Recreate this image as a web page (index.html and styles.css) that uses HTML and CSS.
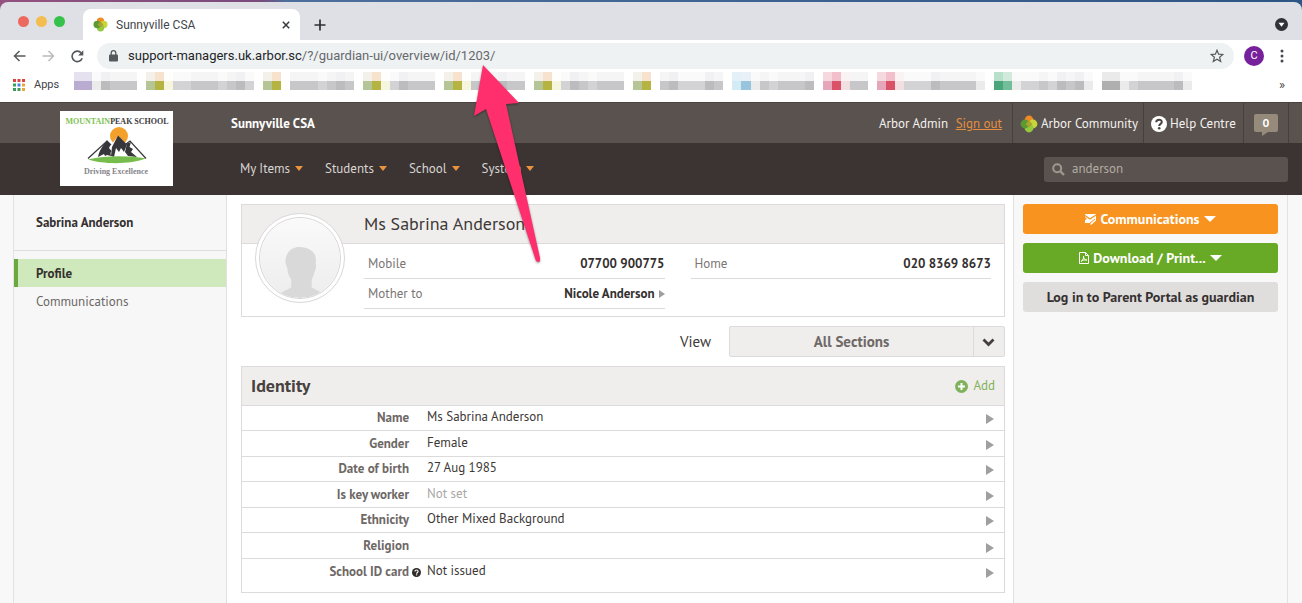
FILE: index.html
```
<!DOCTYPE html>
<html lang="en">
<head>
  <meta charset="UTF-8">
  <meta name="viewport" content="width=device-width, initial-scale=1.0">
  <title>Sunnyville CSA</title>
  <link rel="stylesheet" href="styles.css">
</head>
<body>
  <svg class="sprites" width="0" height="0" aria-hidden="true">
    <symbol id="flower" viewBox="0 0 18 18">
      <circle cx="9" cy="5" r="4.4" fill="#f08a24"/>
      <circle cx="13" cy="9" r="4.4" fill="#c9d63a"/>
      <circle cx="9" cy="13" r="4.4" fill="#93c83f"/>
      <circle cx="5" cy="9" r="4.4" fill="#5b9a33"/>
      <path d="M9 5.5 12.5 9 9 12.5 5.5 9z" fill="#a5a52f"/>
    </symbol>
  </svg>

  <!-- Browser window -->
  <div class="desktop">
    <div class="tab-strip">
      <div class="lights"><span class="red"></span><span class="amber"></span><span class="green"></span></div>
      <div class="tab">
        <svg width="15" height="15"><use href="#flower"/></svg>
        <span class="tab-title">Sunnyville CSA</span>
        <button class="chrome-btn" aria-label="Close tab">
          <svg width="8" height="8" viewBox="0 0 8 8"><path d="M.8.8 7.2 7.2M7.2.8.8 7.2" stroke="#36393d" stroke-width="1.5"/></svg>
        </button>
      </div>
      <button class="chrome-btn new-tab" aria-label="New tab">
        <svg width="12" height="12" viewBox="0 0 12 12"><path d="M6 .5v11M.5 6h11" stroke="#2d3034" stroke-width="1.7"/></svg>
      </button>
      <button class="chrome-btn tab-search" aria-label="Search tabs">
        <svg width="13" height="13" viewBox="0 0 13 13"><circle cx="6.5" cy="6.5" r="6.5" fill="#2f3337"/><path d="M3.5 4.8h6l-3 4z" fill="#fff"/></svg>
      </button>
    </div>
  </div>
  <div class="toolbar">
    <button class="chrome-btn" aria-label="Back">
      <svg width="13" height="12" viewBox="0 0 13 12"><path d="M12.5 6H1.5M6.5 1l-5 5 5 5" fill="none" stroke="#54585c" stroke-width="1.5"/></svg>
    </button>
    <button class="chrome-btn" aria-label="Forward">
      <svg width="13" height="12" viewBox="0 0 13 12"><path d="M.5 6h11M6.5 1l5 5-5 5" fill="none" stroke="#b9bbbe" stroke-width="1.5"/></svg>
    </button>
    <button class="chrome-btn" aria-label="Reload">
      <svg width="13" height="13" viewBox="0 0 13 13"><path d="M11.2 8.2A5.2 5.2 0 1 1 10.3 3" fill="none" stroke="#54585c" stroke-width="1.6"/><path d="M12.3.3v5.2H7.1z" fill="#54585c"/></svg>
    </button>
    <div class="address">
      <svg width="9" height="12" viewBox="0 0 9 12"><rect y="4.5" width="9" height="7" rx="1" fill="#55595d"/><path d="M2.2 5V3a2.3 2.3 0 0 1 4.6 0v2" fill="none" stroke="#55595d" stroke-width="1.3"/></svg>
      <span class="url"><b>support-managers.uk.arbor.sc</b>/?/guardian-ui/overview/id/1203/</span>
      <svg width="14" height="14" viewBox="0 0 14 14"><path d="m7 1.2 1.6 4 4.3.3-3.3 2.8 1.1 4.2L7 10.2l-3.7 2.3 1.1-4.2-3.3-2.8 4.3-.3z" fill="none" stroke="#55595d" stroke-width="1.2"/></svg>
    </div>
    <button class="account" aria-label="Account">C</button>
    <button class="chrome-btn" aria-label="Menu">
      <svg width="4" height="14" viewBox="0 0 4 14" fill="#45484c"><circle cx="2" cy="2" r="1.5"/><circle cx="2" cy="7" r="1.5"/><circle cx="2" cy="12" r="1.5"/></svg>
    </button>
  </div>
  <div class="bookmarks">
    <a class="apps" href="#">
      <svg width="12" height="12" viewBox="0 0 12 12">
        <path d="M0 0h3v3H0zM4.5 0h3v3h-3zM9 0h3v3H9z" fill="#d9473c"/>
        <path d="M0 4.5h3v3H0z" fill="#35a25a"/><path d="M4.5 4.5h3v3h-3z" fill="#4a84e0"/><path d="M9 4.5h3v3H9z" fill="#e8a93a"/>
        <path d="M0 9h3v3H0zM4.5 9h3v3h-3z" fill="#3b9c5a"/><path d="M9 9h3v3H9z" fill="#e8a93a"/>
      </svg>
      Apps
    </a>
    <svg class="mosaic" id="mosaic" height="21" aria-hidden="true"></svg>
    <button class="chrome-btn more" aria-label="More bookmarks">»</button>
  </div>

  <!-- Application -->
  <header class="app-header">
    <a class="school-logo" href="#" aria-label="Mountain Peak School">
      <svg width="113" height="75" viewBox="0 0 113 75">
        <text x="57" y="13" text-anchor="middle" class="logo-name"><tspan fill="#7fc257">MOUNTAIN</tspan><tspan fill="#3c3c3c">PEAK SCHOOL</tspan></text>
        <circle cx="59" cy="25" r="9" fill="#f3a12c"/>
        <path d="M28 48 47 30l4 4 7-9 8 8 4-3 16 18z" fill="#fff"/>
        <path d="M28 47.5 47 30l4 4M66 33l4-3 16 17.5" fill="none" stroke="#37363a" stroke-width="1.2"/>
        <path d="M47 29.5 50.5 34 49 37l2.500 3-1 2 .5 3-4-1-2 1-1-2-6 3c1-6 5-12 9-16.500z" fill="#37363a"/>
        <path d="M58 24.5 67 33.5 64 41 61 37l-2 4-3-4-2 9-3-1 1-9z" fill="#37363a"/>
        <path d="M67 32.5 71 31 69.5 36 73 38 71 41 77 46 68 45 65 41z" fill="#37363a"/>
        <path d="M28 48.5c18-4 40-4 58-1-15 6-43 6-58 1z" fill="#77bd4d"/>
        <text x="56" y="63" text-anchor="middle" class="logo-motto">Driving Excellence</text>
      </svg>
    </a>
    <div class="top-bar">
      <strong class="school-name">Sunnyville CSA</strong>
      <div class="user">Arbor Admin <a href="#">Sign out</a></div>
      <a class="top-link community" href="#"><svg width="18" height="18"><use href="#flower"/></svg>Arbor Community</a>
      <a class="top-link help" href="#">
        <svg width="16" height="16" viewBox="0 0 16 16"><circle cx="8" cy="8" r="8" fill="#fff"/><path d="M5.2 6.2C5.3 2.7 10.9 2.9 10.8 6c0 1.9-2.6 1.9-2.6 4" fill="none" stroke="#4b4340" stroke-width="2"/><circle cx="8.2" cy="12.2" r="1.3" fill="#4b4340"/></svg>Help Centre
      </a>
      <button class="notices" aria-label="Notifications"><span>0</span></button>
    </div>
    <div class="nav-bar">
      <nav class="nav">
        <a href="#">My Items</a>
        <a href="#">Students</a>
        <a href="#">School</a>
        <a href="#">System</a>
      </nav>
      <label class="search">
        <svg width="13" height="13" viewBox="0 0 13 13"><circle cx="5.2" cy="5.2" r="4" fill="none" stroke="#a0978e" stroke-width="2"/><path d="m8 8 4 4" stroke="#a0978e" stroke-width="2.4"/></svg>
        <input type="text" value="anderson" aria-label="Search">
      </label>
    </div>
  </header>

  <div class="layout">
    <aside class="sidebar">
      <h2>Sabrina Anderson</h2>
      <nav>
        <a class="active" href="#">Profile</a>
        <a href="#">Communications</a>
      </nav>
    </aside>

    <main class="content">
      <section class="card person">
        <div class="avatar">
          <svg width="82" height="82" viewBox="0 0 82 82">
            <defs>
              <linearGradient id="shade" x1="0" y1="0" x2="0" y2="1"><stop offset="0" stop-color="#fafafa"/><stop offset="1" stop-color="#ededed"/></linearGradient>
              <clipPath id="disc"><circle cx="41" cy="41" r="41"/></clipPath>
            </defs>
            <g clip-path="url(#disc)">
              <rect width="82" height="82" fill="url(#shade)"/>
              <path d="M15 82c4-6 12-7 17-11l0-8c-3-4-4-8-4-12-3-5-2-10 0-14 3-6 9-8 15-7 10 1 16 7 14 17 1 3 0 6-1 8-1 4-2 6-3 8v8c5 4 13 5 17 11z" fill="#d9d9d9"/>
            </g>
          </svg>
        </div>
        <h1>Ms Sabrina Anderson</h1>
        <div class="contacts">
          <dl>
            <div><dt>Mobile</dt><dd>07700 900775</dd></div>
            <div><dt>Mother to</dt><dd><a class="go" href="#">Nicole Anderson</a></dd></div>
          </dl>
          <dl>
            <div><dt>Home</dt><dd>020 8369 8673</dd></div>
          </dl>
        </div>
      </section>

      <div class="view">
        <label for="view">View</label>
        <div class="select">
          <select id="view"><option>All Sections</option></select>
          <svg width="13" height="9" viewBox="0 0 13 9"><path d="m1.5 1.5 5 5 5-5" fill="none" stroke="#45403e" stroke-width="2.8"/></svg>
        </div>
      </div>

      <section class="card identity">
        <div class="card-head">
          <h2>Identity</h2>
          <button class="add">
            <svg width="13" height="13" viewBox="0 0 13 13"><circle cx="6.5" cy="6.5" r="6.5" fill="#7fb25a"/><path d="M6.5 3v7M3 6.5h7" stroke="#fff" stroke-width="2"/></svg>
            Add
          </button>
        </div>
        <table>
          <tr><th scope="row">Name</th><td>Ms Sabrina Anderson</td></tr>
          <tr><th scope="row">Gender</th><td>Female</td></tr>
          <tr><th scope="row">Date of birth</th><td>27 Aug 1985</td></tr>
          <tr><th scope="row">Is key worker</th><td class="unset">Not set</td></tr>
          <tr><th scope="row">Ethnicity</th><td>Other Mixed Background</td></tr>
          <tr><th scope="row">Religion</th><td></td></tr>
          <tr>
            <th scope="row">School ID card
              <svg class="hint" width="9" height="9" viewBox="0 0 16 16"><circle cx="8" cy="8" r="8" fill="#2f2c2b"/><path d="M5.2 6.2C5.3 2.7 10.9 2.9 10.8 6c0 1.9-2.6 1.9-2.6 4" fill="none" stroke="#fff" stroke-width="2"/><circle cx="8.2" cy="12.2" r="1.3" fill="#fff"/></svg>
            </th>
            <td>Not issued</td>
          </tr>
        </table>
      </section>
    </main>

    <aside class="actions">
      <button class="orange">
        <svg width="11" height="12" viewBox="0 0 11 12"><path d="M0 1h11v6l-3 1-1 2H0V7l2-1-2-2z" fill="#fff"/><path d="m0 2.5 5 3.5 6-4" fill="none" stroke="#f7931e" stroke-width="1.2"/><path d="M5.5 11.5 10.5 7" stroke="#fff" stroke-width="1.5"/><path d="m5 10 5-4" stroke="#f7931e"/></svg>
        <span class="drop">Communications</span>
      </button>
      <button class="green">
        <svg width="10" height="12" viewBox="0 0 10 12"><path d="M.5.5h6l3 3v8h-9zM6.5.5v3h3M2 9.5c2-1 3-4 2.5-5.5 0 3 1.5 4 3.5 4-3-.3-4 0-6 1.5" fill="none" stroke="#fff"/></svg>
        <span class="drop">Download / Print...</span>
      </button>
      <button class="grey">Log in to Parent Portal as guardian</button>
    </aside>
  </div>

  <svg class="pointer" width="70" height="202" viewBox="0 0 70 202" aria-hidden="true">
    <path d="M13 1 49 39 36 40 70 194q1 4-2 4-2 0-3-4L16 45 4 52z" fill="#ff2f6e"/>
  </svg>

  <script>
    // one letter per cell of the bookmark row: [upper colour, lower colour]
    const palette = {
      p: ['#e6e1ef', '#b9acd0'], l: ['#fafafa', '#ebebec'], g: ['#f5f5f6', '#c7c7ca'], h: ['#fafafa', '#d3d2d5'], k: ['#f1f1f3', '#bcbcbf'],
      a: ['#f4f0ea', '#b5c595'], b: ['#f7e3cd', '#b5b341'], y: ['#fefefd', '#f6f6df'],
      c: ['#e3f0f8', '#d2ebf4'], d: ['#e8f0f8', '#98c4dd'],
      m: ['#f5d9df', '#e4a6b8'], r: ['#f2bfca', '#db5268'], s: ['#fbf2f3', '#f2dfe1'],
      e: ['#b9e0cb', '#4aa67a'], f: ['#d0ebdd', '#72be98'], n: ['#eaeaea', '#afafaf']
    };
    const cells = 'pplkggg.abyhhggghgkh.ab.ggghgkg.abyhkggg.abyghgkgg.abyhkghggg.ab.gkhhhkg.cdlghgggk.mrsgg.mrshhhkggggl.eflhhghkgkl.nnlhggggkl';
    const mosaic = document.getElementById('mosaic');
    let rects = '';
    [...cells].forEach((cell, i) => {
      if (!palette[cell]) return;
      const [upper, lower] = palette[cell];
      const x = Math.round(i * 9.02);
      const width = Math.round((i + 1) * 9.02) - x;
      rects += `<rect x="${x}" width="${width}" height="9" fill="${upper}"/><rect x="${x}" y="9" width="${width}" height="9" fill="${lower}"/>`;
    });
    mosaic.innerHTML = rects;
  </script>
</body>
</html>
```
FILE: styles.css
```
* {
  box-sizing: border-box;
}

body {
  margin: 0;
  min-height: 100vh;
  display: flex;
  flex-direction: column;
  font-family: "PT Sans", "Noto Sans", sans-serif;
  font-size: 13px;
  line-height: 18px;
  color: #3c3836;
  background: #fff;
}

h1, h2, dl, dd {
  margin: 0;
}

a {
  color: inherit;
  text-decoration: none;
}

button, input, select {
  font: inherit;
  color: inherit;
  border: 0;
  padding: 0;
  background: none;
}

button {
  cursor: pointer;
}

svg {
  flex: none;
}

.sprites {
  position: absolute;
}

/* browser window */
.desktop {
  padding-top: 2px;
  background: linear-gradient(90deg, #93527f, #7a4a7c 20%, #4d6f9c 22%, #2d5586);
}

.tab-strip {
  display: flex;
  height: 38px;
  padding: 0 14px 0 18px;
  align-items: center;
  background: #dfe0e5;
  border-radius: 8px 8px 0 0;
  font-family: Roboto, sans-serif;
  font-size: 12px;
}

.lights {
  display: flex;
  gap: 7px;
  margin-right: 18px;
}

.lights span {
  width: 11px;
  height: 11px;
  border-radius: 50%;
}

.lights .red {
  background: #ec695f;
}

.lights .amber {
  background: #f4bd50;
}

.lights .green {
  background: #35c24a;
}

.tab {
  display: flex;
  align-items: center;
  gap: 8px;
  align-self: flex-end;
  width: 217px;
  height: 31px;
  padding: 0 10px;
  background: #fff;
  border-radius: 8px 8px 0 0;
}

.tab-title {
  flex: 1;
  color: #43464a;
}

.chrome-btn {
  display: flex;
  align-items: center;
  justify-content: center;
}

.new-tab {
  margin: 7px 0 0 14px;
}

.tab-search {
  margin: 7px 0 0 auto;
}

.toolbar {
  display: flex;
  align-items: center;
  height: 32px;
  padding: 0 18px 0 13px;
  gap: 16px;
  font-family: Roboto, sans-serif;
}

.address {
  flex: 1;
  display: flex;
  align-items: center;
  gap: 10px;
  height: 26px;
  margin-left: -3px;
  padding: 0 10px 0 12px;
  border-radius: 13px;
  background: #eff2f3;
  color: #66696d;
}

.url {
  flex: 1;
}

.url b {
  font-weight: 400;
  color: #232528;
}

.account {
  width: 20px;
  height: 20px;
  margin-left: -6px;
  border-radius: 50%;
  background: #77209b;
  color: #fff;
  font-size: 11px;
}

.bookmarks {
  display: flex;
  align-items: center;
  height: 30px;
  padding: 0 17px 4px 13px;
  font-family: Roboto, sans-serif;
  font-size: 11px;
  color: #3f4246;
}

.apps {
  display: flex;
  align-items: center;
  gap: 9px;
  width: 61px;
}

.more {
  font-size: 13px;
}

.mosaic {
  flex: 1;
  align-self: flex-start;
  min-width: 0;
}

/* school header */
.app-header {
  position: relative;
  color: #f3f1ef;
}

.school-logo {
  position: absolute;
  left: 60px;
  top: 9px;
  width: 113px;
  height: 75px;
  background: #fff;
}

.logo-name,
.logo-motto {
  font: bold 8px "Liberation Serif", serif;
}

.logo-motto {
  fill: #858489;
}

.top-bar {
  display: flex;
  align-items: center;
  height: 41px;
  padding: 0 13px 0 231px;
  background: #5a524e;
  border-top: 1px solid #4a4340;
}

.school-name {
  flex: 1;
  padding-top: 2px;
  color: #fff;
}

.user {
  padding: 2px 10px 0 0;
}

.user a {
  margin-left: 4px;
  color: #e58f3f;
  text-decoration: underline;
}

.top-link,
.notices {
  display: flex;
  align-items: center;
  height: 40px;
  border-left: 1px solid #463f3c;
}

.top-link {
  padding: 1px 0 0 7px;
  gap: 3px;
}

.community {
  width: 131px;
}

.help {
  width: 100px;
}

.notices {
  width: 46px;
  padding-left: 10px;
  border-right: 1px solid #463f3c;
}

.notices span {
  position: relative;
  width: 24px;
  height: 18px;
  border-radius: 2px;
  background: #968a7b;
  color: #fff;
  font-size: 12px;
  font-weight: bold;
}

.notices span::after {
  content: "";
  position: absolute;
  left: 8px;
  top: 18px;
  border-top: 4px solid #968a7b;
  border-right: 6px solid transparent;
}

.nav-bar {
  display: flex;
  align-items: center;
  justify-content: space-between;
  height: 52px;
  padding: 0 14px 0 240px;
  background: #3b3433;
}

.nav {
  display: flex;
  gap: 22px;
  color: #d9d5d2;
}

.nav a::after,
.drop::after {
  content: "";
  display: inline-block;
  vertical-align: middle;
  border: 4px solid transparent;
  border-top: 5px solid #eb923c;
  border-bottom: 0;
  margin: 0 0 2px 5px;
}

.search {
  display: flex;
  align-items: center;
  gap: 7px;
  width: 244px;
  height: 25px;
  padding: 0 8px;
  border-radius: 3px;
  background: #5a524e;
  color: #b3aba4;
}

.search input {
  flex: 1;
  min-width: 0;
  outline: none;
}

/* page columns */
.layout {
  flex: 1;
  display: flex;
  padding: 0 14px 0 13px;
  background: #f9f8f9;
}

.sidebar {
  width: 213px;
  border-left: 1px solid #e5e0e4;
  background: #f7f7f7;
}

.sidebar h2 {
  height: 56px;
  padding: 19px 22px;
  border-bottom: 1px solid #dedbdd;
  font-size: 13px;
  line-height: 18px;
  color: #34302f;
}

.sidebar nav {
  margin-top: 8px;
}

.sidebar nav a {
  display: block;
  padding: 6px 22px 4px;
  color: #6c6866;
}

.sidebar nav .active {
  padding-left: 18px;
  border-left: 4px solid #6aa840;
  background: #cfe8bc;
  font-weight: bold;
  color: #34302f;
}

.content {
  flex: 1;
  min-width: 0;
  padding: 9px 8px 10px 14px;
  background: #fff;
  border: solid #e2dfe1;
  border-width: 0 1px;
}

.card {
  border: 1px solid #dcdada;
}

.person {
  position: relative;
  height: 113px;
}

.person h1 {
  height: 39px;
  padding-left: 122px;
  background: #efeeed;
  border-bottom: 1px solid #dcdada;
  font-size: 18px;
  font-weight: 400;
  line-height: 38px;
}

.avatar {
  position: absolute;
  left: 13px;
  top: 8px;
  width: 90px;
  height: 90px;
  padding: 3px;
  border: 1px solid #d9d7d8;
  border-radius: 50%;
  background: #fff;
}

.avatar svg {
  display: block;
  border: 1px solid #d6d4d5;
  border-radius: 50%;
}

.contacts {
  display: grid;
  grid-template-columns: 1fr 1fr;
  gap: 26px;
  padding: 5px 13px 0 122px;
}

.contacts dl > div {
  display: flex;
  justify-content: space-between;
  height: 30px;
  padding: 6px 0 5px 4px;
  border-bottom: 1px solid #dcdada;
}

.contacts dt {
  color: #7b7674;
}

.contacts dd {
  font-weight: bold;
  color: #34302f;
}

.go::after {
  content: "";
  display: inline-block;
  border: 4px solid transparent;
  border-left: 6px solid #a19e9e;
  border-right: 0;
  margin-left: 4px;
}

.view {
  display: flex;
  align-items: center;
  justify-content: flex-end;
  gap: 18px;
  margin: 9px 0;
  font-size: 15px;
}

.select {
  position: relative;
  width: 276px;
}

.select select {
  display: block;
  width: 100%;
  height: 31px;
  padding-right: 31px;
  appearance: none;
  border: 1px solid #dcdada;
  border-radius: 2px;
  background: linear-gradient(#dcdada, #dcdada) right 30px top / 1px 100% no-repeat #efeeed;
  font-weight: bold;
  color: #6e6866;
  text-align: center;
  text-align-last: center;
}

.select svg {
  position: absolute;
  right: 10px;
  top: 12px;
}

.card-head {
  display: flex;
  align-items: center;
  justify-content: space-between;
  height: 39px;
  padding: 0 9px;
  background: #efeeed;
  border-bottom: 1px solid #dcdada;
}

.card-head h2 {
  font-size: 18px;
  color: #474240;
}

.add {
  display: flex;
  align-items: center;
  gap: 5px;
  color: #7fb25a;
}

.identity {
  padding-bottom: 8px;
}

.identity table {
  width: 100%;
  border-spacing: 0;
}

.identity tr {
  height: 25px;
}

.identity tr:nth-child(even) {
  height: 26px;
}

.identity th,
.identity td {
  padding: 0;
  border-bottom: 1px solid #dcdada;
}

.identity tr:last-child > * {
  border-bottom: 0;
}

.identity th {
  position: relative;
  width: 167px;
  text-align: right;
  color: #6e6866;
}

.identity td {
  padding: 0 10px 2px 18px;
}

.identity td::after {
  content: "";
  float: right;
  margin-top: 6px;
  border: 5px solid transparent;
  border-left: 8px solid #a19e9e;
  border-right: 0;
}

.identity .unset {
  color: #aaa6a5;
}

.hint {
  position: absolute;
  right: -12px;
  top: 9px;
}

/* action buttons */
.actions {
  display: flex;
  flex-direction: column;
  gap: 9px;
  width: 274px;
  padding: 9px 9px 0;
  border-right: 1px solid #e5e0e4;
}

.actions button {
  display: flex;
  align-items: center;
  justify-content: center;
  gap: 4px;
  height: 30px;
  padding-bottom: 1px;
  border-radius: 3px;
  font-size: 14px;
  font-weight: bold;
  color: #fff;
}

.actions .orange {
  background: #f7931e;
}

.actions .green {
  background: #68a925;
}

.actions .grey {
  background: #e0dddd;
  color: #34302f;
}

.drop::after {
  border-width: 6px 6px 0;
  border-top-color: #fff;
  margin-left: 4px;
}

/* arrow drawn over the page */
.pointer {
  position: absolute;
  left: 470px;
  top: 64px;
  filter: drop-shadow(0 1px 1px rgba(0, 0, 0, 0.4));
  pointer-events: none;
}
```
